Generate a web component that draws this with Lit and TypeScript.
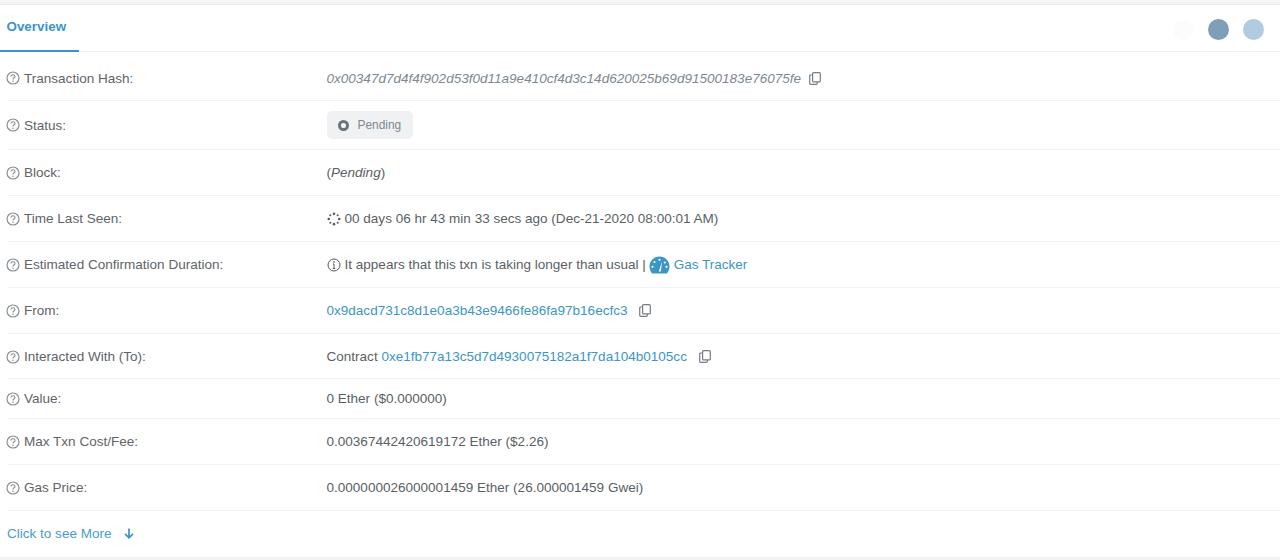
import { LitElement, html, css, svg } from "lit";
import { customElement } from "lit/decorators.js";

const help = html`<svg class="help" viewBox="0 0 14 14" width="14" height="14" fill="none"><circle cx="7" cy="7" r="6" stroke="#868c92" stroke-width="1.15"/><path d="M5 5.6c0-1.200.9-1.900 2-1.900s2 .7 2 1.700c0 1.400-2 1.400-2 3" stroke="#868c92" stroke-width="1.100" /><circle cx="7" cy="10.200" r=".75" fill="#868c92"/></svg>`;
const copy = html`<svg class="copy" viewBox="0 0 12 13" width="12" height="13" fill="none" stroke="#777e85" stroke-width="1.2"><rect x="3.6" y=".7" width="7.7" height="9.2" rx="1"/><path d="M3.4 3H1.7a1 1 0 0 0-1 1v7.3a1 1 0 0 0 1 1h5.6a1 1 0 0 0 1-1V10"/></svg>`;
const spinner = svg`${[0, 45, 90, 135, 180, 225, 270, 315].map((a, i) => {
  const r = (a * Math.PI) / 180;
  return svg`<circle cx=${7 + 5.2 * Math.cos(r)} cy=${7 + 5.2 * Math.sin(r)} r=${i % 2 ? 1.05 : 1.35} fill="#5a5f65"/>`;
})}`;

@customElement("app-root")
export class AppRoot extends LitElement {
  static styles = css`
    :host { display: block; width: 1280px; height: 560px; background: #fff; font-family: "Liberation Sans", Arial, sans-serif; font-size: 13.54px; color: #5a5f65; overflow: hidden; }
    .top { height: 4px; background: #f4f5f6; border-bottom: 1px solid #e9ebee; }
    .tabs { height: 46px; display: flex; align-items: stretch; justify-content: space-between; border-bottom: 1px solid #eef0f4; }
    .tab { width: 79px; padding-left: 6.5px; box-sizing: border-box; display: flex; align-items: center; color: #3c95c7; font-weight: 700; font-size: 13.4px; border-bottom: 2px solid #3c95c7; margin-bottom: -1px; padding-bottom: 2px; }
    .dots { display: flex; align-items: center; gap: 14px; padding-right: 16px; padding-top: 3px; }
    .dot { width: 21px; height: 21px; border-radius: 50%; }
    .d1 { background: #fcfcfc; }
    .d2 { background: #7f9fb8; }
    .d3 { background: #b3cbde; }
    .list { padding-left: 7px; }
    .row { display: grid; grid-template-columns: 319.5px 1fr; align-items: center; height: 46px; box-sizing: border-box; border-bottom: 1px solid #f0f2f5; }
    .tall { height: 49px; }
    .first { padding-top: 4px; }
    .trim { height: 45px; padding-top: 1px; }
    .short { height: 40px; }
    .label { display: flex; align-items: center; gap: 4px; color: #5f6469; margin-left: -1px; }
    .help { flex: none; }
    .val { display: flex; align-items: center; white-space: pre; }
    .hash { font-style: italic; color: #7d8892; }
    .copy { margin-left: 8px; flex: none; }
    .wide { margin-left: 12px; }
    .link { color: #3c95c7; }
    .badge { display: flex; align-items: center; gap: 9px; height: 28px; width: 86px; box-sizing: border-box; padding-left: 11px; background: #eff1f3; border-radius: 5px; color: #7d8892; font-size: 11.9px; }
    .bullet { width: 11px; height: 11px; border-radius: 50%; border: 3.5px solid #68737f; box-sizing: border-box; background: #fff; }
    .icon { margin-right: 4px; flex: none; }
    .gauge { margin-left: -1px; }
    .more { display: flex; align-items: center; gap: 12px; height: 46px; box-sizing: border-box; padding: 0 0 2px 7px; color: #4a9ccb; }
    .bottom { height: 4px; background: #f0f2f6; }
  `;

  private row(label: string, value: unknown, cls = "") {
    return html`<div class="row ${cls}"><div class="label">${help}<span>${label}</span></div><div class="val">${value}</div></div>`;
  }

  private wideCopy() {
    return html`<svg class="copy wide" viewBox="0 0 12 13" width="12" height="13" fill="none" stroke="#777e85" stroke-width="1.2"><rect x="3.6" y=".7" width="7.7" height="9.2" rx="1"/><path d="M3.4 3H1.7a1 1 0 0 0-1 1v7.3a1 1 0 0 0 1 1h5.6a1 1 0 0 0 1-1V10"/></svg>`;
  }

  render() {
    return html`
      <div class="top"></div>
      <div class="tabs">
        <div class="tab">Overview</div>
        <div class="dots"><div class="dot d1"></div><div class="dot d2"></div><div class="dot d3"></div></div>
      </div>
      <div class="list">
        ${this.row("Transaction Hash:", html`<span class="hash">0x00347d7d4f4f902d53f0d11a9e410cf4d3c14d620025b69d91500183e76075fe</span>${copy}`, "tall first")}
        ${this.row("Status:", html`<div class="badge"><span class="bullet"></span>Pending</div>`, "tall")}
        ${this.row("Block:", html`<span>(<i>Pending</i>)</span>`)}
        ${this.row("Time Last Seen:", html`<svg class="icon" viewBox="0 0 14 14" width="14" height="14">${spinner}</svg><span>00 days 06 hr 43 min 33 secs ago (Dec-21-2020 08:00:01 AM)</span>`)}
        ${this.row("Estimated Confirmation Duration:", html`<svg class="icon" viewBox="0 0 14 14" width="14" height="14" fill="none"><circle cx="7" cy="7" r="6" stroke="#55595f"/><path d="M7 6v4.4M5.8 10.5h2.4M6 6h1" stroke="#55595f"/><circle cx="7" cy="3.9" r=".8" fill="#55595f"/></svg><span>It appears that this txn is taking longer than usual | </span><svg class="icon gauge" viewBox="0 0 21 18" width="21" height="18"><path fill="#3c95c7" d="M10.5 0.5C4.8.5.5 5 .5 10.5c0 2.4.8 4.6 2.2 6.4.3.4.7.6 1.2.6h13.2c.5 0 .9-.2 1.2-.6 1.400-1.800 2.200-4 2.200-6.400C20.500 5 16.200.5 10.500.5z"/><path d="M9.800 15.500 13 5.500 11.900 15.500z" fill="#fff"/><circle cx="10.500" cy="3.800" r="1.100" fill="#fff"/><circle cx="5.500" cy="6" r="1.100" fill="#fff"/><circle cx="3.500" cy="10.800" r="1.100" fill="#fff"/><circle cx="17.500" cy="10.800" r="1.100" fill="#fff"/><circle cx="15.800" cy="6.500" r="1.100" fill="#fff"/></svg><span class="link">Gas Tracker</span>`)}
        ${this.row("From:", html`<span class="link">0x9dacd731c8d1e0a3b43e9466fe86fa97b16ecfc3</span>${this.wideCopy()}`)}
        ${this.row("Interacted With (To):", html`<span>Contract </span><span class="link">0xe1fb77a13c5d7d4930075182a1f7da104b0105cc</span>${this.wideCopy()}`, "trim")}
        ${this.row("Value:", html`<span>0 Ether ($0.000000)</span>`, "short")}
        ${this.row("Max Txn Cost/Fee:", html`<span>0.00367442420619172 Ether ($2.26)</span>`)}
        ${this.row("Gas Price:", html`<span>0.000000026000001459 Ether (26.000001459 Gwei)</span>`)}
      </div>
      <div class="more"><span>Click to see More</span><svg viewBox="0 0 10 11" width="10" height="11" fill="none" stroke="#3c95c7" stroke-width="1.700"><path d="M5 .5v9M1 5.800 5 9.800l4-4"/></svg></div>
      <div class="bottom"></div>
    `;
  }
}
